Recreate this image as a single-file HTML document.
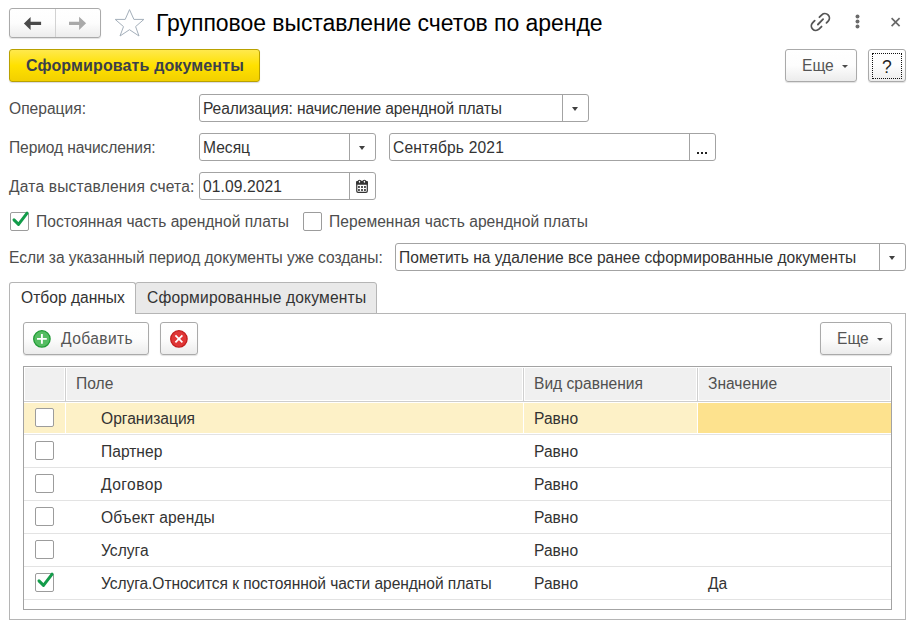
<!DOCTYPE html>
<html><head><meta charset="utf-8">
<style>
html,body{margin:0;padding:0;background:#fff;width:913px;height:627px;overflow:hidden;position:relative}
body{font-family:"Liberation Sans",sans-serif;font-size:15.6px;color:#4d4d4d}
.a{position:absolute;white-space:nowrap}
.t{position:absolute;white-space:nowrap;line-height:20px}
.btn{position:absolute;box-sizing:border-box;border:1px solid #aaaaaa;border-radius:3px;background:linear-gradient(#fff 0%,#fdfdfd 50%,#ececec 100%);box-shadow:0 1px 1px rgba(0,0,0,.12)}
.fld{position:absolute;box-sizing:border-box;border:1px solid #a3a3a3;border-radius:3px;background:#fff}
.sep{position:absolute;top:0;bottom:0;width:1px;background:#a3a3a3}
.tri{position:absolute;width:0;height:0;border-left:3px solid transparent;border-right:3px solid transparent;border-top:4px solid #404040}
.tri2{position:absolute;width:0;height:0;border-left:3px solid transparent;border-right:3px solid transparent;border-top:3px solid #4a4a4a}
.cb{position:absolute;box-sizing:border-box;width:19px;height:19px;border:1px solid #9c9c9c;border-radius:2px;background:#fff}
</style></head><body>

<!-- nav buttons -->
<div class="btn" style="left:9px;top:8px;width:92px;height:30px"></div>
<div class="a" style="left:55px;top:9px;width:1px;height:28px;background:#d2d2d2"></div>
<svg class="a" style="left:0;top:0" width="100" height="40"><path d="M23.9 23.45 L30.6 17 L30.6 21.8 L41.1 21.8 L41.1 25.1 L30.6 25.1 L30.6 29.9 Z" fill="#4a4a4a"/><path d="M86.1 23.35 L79.1 16.8 L79.1 21.7 L69 21.7 L69 25.1 L79.1 25.1 L79.1 29.9 Z" fill="#a9a9a9"/></svg>
<!-- star -->
<svg class="a" style="left:110px;top:5px" width="40" height="36" viewBox="0 0 40 36"><path d="M19.5 4.6 L23.9 14.4 L33.9 14.4 L25.6 21.6 L29 31 L19.5 24.7 L10 31 L13.5 21.6 L5.2 14.4 L15.2 14.4 Z" fill="none" stroke="#a4afba" stroke-width="1" stroke-linejoin="miter" stroke-miterlimit="10"/></svg>
<div class="a" style="letter-spacing:-0.055px;left:156px;top:8px;font-size:23px;line-height:30px;color:#000">Групповое выставление счетов по аренде</div>
<!-- link icon -->
<svg class="a" style="left:805px;top:8px" width="30" height="28" viewBox="0 0 30 28"><g fill="none" stroke="#555" stroke-width="1.8" stroke-linecap="round"><path d="M14.42 9.22 L16.82 6.82 A4.5 4.5 0 0 1 23.18 13.18 L21.48 14.88"/><path d="M9.69 12.7 L7.57 14.82 A4.5 4.5 0 0 0 13.93 21.18 L16.55 18.56"/><path d="M12.9 16.5 L18.1 11.2"/></g></svg>
<!-- dots -->
<svg class="a" style="left:848px;top:8px" width="20" height="28"><g fill="#6a6a6a"><circle cx="9.5" cy="8.5" r="1.95"/><circle cx="9.5" cy="13.5" r="1.95"/><circle cx="9.5" cy="18.45" r="1.95"/></g></svg>
<!-- close -->
<svg class="a" style="left:885px;top:10px" width="20" height="20"><path d="M6.6 8.1 L14.6 16.1 M14.6 8.1 L6.6 16.1" stroke="#666" stroke-width="1.6"/></svg>

<!-- yellow button -->
<div class="a" style="left:9px;top:49px;width:251px;height:33px;box-sizing:border-box;border:1px solid #b9a100;border-radius:3px;background:linear-gradient(#ffe94d 0%,#ffe100 50%,#f2d000 100%);box-shadow:0 1px 1px rgba(0,0,50,.15)"></div>
<div class="a" style="letter-spacing:0.14px;left:26px;top:56px;font-size:16px;font-weight:bold;line-height:20px;color:#3b3f4b">Сформировать документы</div>

<!-- Еще button -->
<div class="btn" style="left:785px;top:49px;width:72px;height:33px"></div>
<div class="a" style="left:802px;top:56px;line-height:20px;color:#555">Еще</div>
<div class="tri2" style="left:842px;top:65px"></div>
<!-- ? button -->
<div class="btn" style="left:868px;top:49px;width:38px;height:33px"></div>
<div class="a" style="left:872px;top:53px;width:30px;height:26px;box-sizing:border-box;border:1px dotted #111"></div>
<div class="a" style="left:882px;top:56px;font-size:17.5px;line-height:22px;color:#222">?</div>

<!-- Операция -->
<div class="a" style="left:9px;top:99px;line-height:20px">Операция:</div>
<div class="fld" style="left:199px;top:94px;width:390px;height:28px"><div class="sep" style="left:362px"></div></div>
<div class="a" style="letter-spacing:-0.125px;left:203px;top:99px;line-height:20px;color:#333">Реализация: начисление арендной платы</div>
<div class="tri" style="left:572px;top:107px"></div>

<!-- Период -->
<div class="a" style="letter-spacing:-0.11px;left:9px;top:138px;line-height:20px">Период начисления:</div>
<div class="fld" style="left:199px;top:133px;width:177px;height:28px"><div class="sep" style="left:149px"></div></div>
<div class="a" style="left:203px;top:138px;line-height:20px;color:#333">Месяц</div>
<div class="tri" style="left:359px;top:146px"></div>
<div class="fld" style="left:389px;top:133px;width:327px;height:28px"><div class="sep" style="left:299px"></div></div>
<div class="a" style="letter-spacing:0.16px;left:393px;top:138px;line-height:20px;color:#333">Сентябрь 2021</div>
<div class="a" style="left:697px;top:152px;width:2px;height:2px;background:#222"></div>
<div class="a" style="left:701px;top:152px;width:2px;height:2px;background:#222"></div>
<div class="a" style="left:705px;top:152px;width:2px;height:2px;background:#222"></div>

<!-- Дата -->
<div class="a" style="letter-spacing:0.18px;left:9px;top:177px;line-height:20px">Дата выставления счета:</div>
<div class="fld" style="left:199px;top:172px;width:177px;height:28px"><div class="sep" style="left:149px"></div></div>
<div class="a" style="letter-spacing:0.1px;left:203px;top:177px;line-height:20px;color:#333">01.09.2021</div>
<svg class="a" style="left:352px;top:176px" width="20" height="20" viewBox="0 0 20 20"><rect x="4.75" y="5.4" width="10.55" height="10.9" rx="1.3" fill="#fff" stroke="#333" stroke-width="1.2"/><rect x="4.15" y="4.9" width="11.75" height="3.9" rx="1.2" fill="#333"/><ellipse cx="7.5" cy="5.75" rx="1.3" ry="1.6" fill="#fff" stroke="#333" stroke-width="1.05"/><ellipse cx="12.4" cy="5.75" rx="1.3" ry="1.6" fill="#fff" stroke="#333" stroke-width="1.05"/><g fill="#333"><rect x="6.05" y="10.1" width="1.8" height="1.8"/><rect x="9.1" y="10.1" width="1.8" height="1.8"/><rect x="12.05" y="10.1" width="1.8" height="1.8"/><rect x="6.05" y="13.1" width="1.8" height="1.8"/><rect x="9.1" y="13.1" width="1.8" height="1.8"/><rect x="12.05" y="13.1" width="1.8" height="1.8"/></g></svg>

<!-- checkboxes -->
<div class="cb" style="left:10px;top:212px"></div>
<svg class="a" style="left:10px;top:208px" width="22" height="22" viewBox="0 0 22 22"><path d="M4 11.9 L8.5 16.4 L17.1 5.1" fill="none" stroke="#139c4a" stroke-width="3" stroke-linecap="round" stroke-linejoin="round"/></svg>
<div class="a" style="left:36px;top:212px;line-height:20px">Постоянная часть арендной платы</div>
<div class="cb" style="left:303px;top:212px"></div>
<div class="a" style="letter-spacing:0.04px;left:329px;top:212px;line-height:20px">Переменная часть арендной платы</div>

<!-- Если -->
<div class="a" style="letter-spacing:-0.07px;left:9px;top:248px;line-height:20px">Если за указанный период документы уже созданы:</div>
<div class="fld" style="left:395px;top:243px;width:511px;height:28px"><div class="sep" style="left:483px"></div></div>
<div class="a" style="left:399px;top:248px;line-height:20px;color:#333">Пометить на удаление все ранее сформированные документы</div>
<div class="tri" style="left:889px;top:256px"></div>

<!-- tabs -->
<div class="a" style="left:9px;top:313px;width:897px;height:307px;box-sizing:border-box;border:1px solid #b5b5b5"></div>
<div class="a" style="left:135px;top:282px;width:242px;height:32px;box-sizing:border-box;border:1px solid #b5b5b5;border-radius:3px 3px 0 0;background:#e9e9e9"></div>
<div class="a" style="left:9px;top:282px;width:127px;height:32px;box-sizing:border-box;border:1px solid #b5b5b5;border-bottom:none;border-radius:3px 3px 0 0;background:#fff"></div>
<div class="a" style="left:21px;top:288px;line-height:20px;color:#333">Отбор данных</div>
<div class="a" style="letter-spacing:0.17px;left:147px;top:288px;line-height:20px;color:#333">Сформированные документы</div>

<!-- inner toolbar -->
<div class="btn" style="left:23px;top:322px;width:126px;height:33px"></div>
<svg class="a" style="left:31px;top:328px" width="22" height="22" viewBox="0 0 22 22"><circle cx="10.9" cy="10.9" r="8.2" fill="#55bd62" stroke="#1f9a34" stroke-width="1.3"/><path d="M10.9 6 V15.8 M6 10.9 H15.8" stroke="#fff" stroke-width="1.9"/></svg>
<div class="a" style="letter-spacing:0.4px;left:61px;top:329px;line-height:20px;color:#555">Добавить</div>
<div class="btn" style="left:160px;top:322px;width:38px;height:33px"></div>
<svg class="a" style="left:168px;top:328px" width="22" height="22" viewBox="0 0 22 22"><circle cx="10.9" cy="10.9" r="8.2" fill="#e03636" stroke="#c21d1d" stroke-width="1.3"/><path d="M7.4 7.4 L14.4 14.4 M14.4 7.4 L7.4 14.4" stroke="#fff" stroke-width="1.7"/></svg>
<div class="btn" style="left:820px;top:322px;width:72px;height:33px"></div>
<div class="a" style="left:837px;top:329px;line-height:20px;color:#555">Еще</div>
<div class="tri2" style="left:877px;top:338px"></div>

<!-- table -->
<div class="a" style="left:23px;top:366px;width:869px;height:244px;box-sizing:border-box;border:1px solid #a3a3a3;background:#fff"></div>
<div class="a" style="left:25px;top:368px;width:865px;height:32px;background:#f0f0f0"></div>
<div class="a" style="left:24px;top:401px;width:867px;height:1px;background:#cdcdcd"></div>
<div class="a" style="left:65px;top:368px;width:1px;height:33px;background:#d0d0d0"></div>
<div class="a" style="left:64px;top:368px;width:1px;height:32px;background:#fff"></div>
<div class="a" style="left:66px;top:368px;width:1px;height:32px;background:#fff"></div>
<div class="a" style="left:523px;top:368px;width:1px;height:33px;background:#d0d0d0"></div>
<div class="a" style="left:522px;top:368px;width:1px;height:32px;background:#fff"></div>
<div class="a" style="left:524px;top:368px;width:1px;height:32px;background:#fff"></div>
<div class="a" style="left:697px;top:368px;width:1px;height:33px;background:#d0d0d0"></div>
<div class="a" style="left:696px;top:368px;width:1px;height:32px;background:#fff"></div>
<div class="a" style="left:698px;top:368px;width:1px;height:32px;background:#fff"></div>
<div class="a" style="left:76px;top:374px;line-height:20px;color:#505050">Поле</div>
<div class="a" style="left:534px;top:374px;line-height:20px;color:#505050">Вид сравнения</div>
<div class="a" style="left:708px;top:374px;line-height:20px;color:#505050">Значение</div>
<div class="a" style="left:24px;top:403px;width:867px;height:30px;background:#fdf1c7"></div>
<div class="a" style="left:698px;top:403px;width:193px;height:30px;background:#fde28e"></div>
<div class="a" style="left:65px;top:403px;width:1px;height:30px;background:#fff"></div>
<div class="a" style="left:523px;top:403px;width:1px;height:30px;background:#fff"></div>
<div class="a" style="left:697px;top:403px;width:1px;height:30px;background:#fff"></div>
<div class="a" style="left:24px;top:434px;width:867px;height:1px;background:#e3e3e3"></div>
<div class="cb" style="left:35px;top:408px"></div>
<div class="a" style="left:101px;top:409px;line-height:20px;color:#333">Организация</div>
<div class="a" style="left:534px;top:409px;line-height:20px;color:#333">Равно</div>
<div class="a" style="left:24px;top:467px;width:867px;height:1px;background:#e3e3e3"></div>
<div class="cb" style="left:35px;top:441px"></div>
<div class="a" style="left:101px;top:442px;line-height:20px;color:#333">Партнер</div>
<div class="a" style="left:534px;top:442px;line-height:20px;color:#333">Равно</div>
<div class="a" style="left:24px;top:500px;width:867px;height:1px;background:#e3e3e3"></div>
<div class="cb" style="left:35px;top:474px"></div>
<div class="a" style="letter-spacing:0.43px;left:101px;top:475px;line-height:20px;color:#333">Договор</div>
<div class="a" style="left:534px;top:475px;line-height:20px;color:#333">Равно</div>
<div class="a" style="left:24px;top:533px;width:867px;height:1px;background:#e3e3e3"></div>
<div class="cb" style="left:35px;top:507px"></div>
<div class="a" style="letter-spacing:0.12px;left:101px;top:508px;line-height:20px;color:#333">Объект аренды</div>
<div class="a" style="left:534px;top:508px;line-height:20px;color:#333">Равно</div>
<div class="a" style="left:24px;top:566px;width:867px;height:1px;background:#e3e3e3"></div>
<div class="cb" style="left:35px;top:540px"></div>
<div class="a" style="left:101px;top:541px;line-height:20px;color:#333">Услуга</div>
<div class="a" style="left:534px;top:541px;line-height:20px;color:#333">Равно</div>
<div class="a" style="left:24px;top:599px;width:867px;height:1px;background:#e3e3e3"></div>
<div class="cb" style="left:35px;top:573px"></div>
<svg class="a" style="left:35px;top:569px" width="22" height="22" viewBox="0 0 22 22"><path d="M4 11.9 L8.5 16.4 L17.1 5.1" fill="none" stroke="#139c4a" stroke-width="3" stroke-linecap="round" stroke-linejoin="round"/></svg>
<div class="a" style="letter-spacing:-0.08px;left:101px;top:574px;line-height:20px;color:#333">Услуга.Относится к постоянной части арендной платы</div>
<div class="a" style="left:534px;top:574px;line-height:20px;color:#333">Равно</div>
<div class="a" style="left:708px;top:574px;line-height:20px;color:#333">Да</div>
</body></html>
